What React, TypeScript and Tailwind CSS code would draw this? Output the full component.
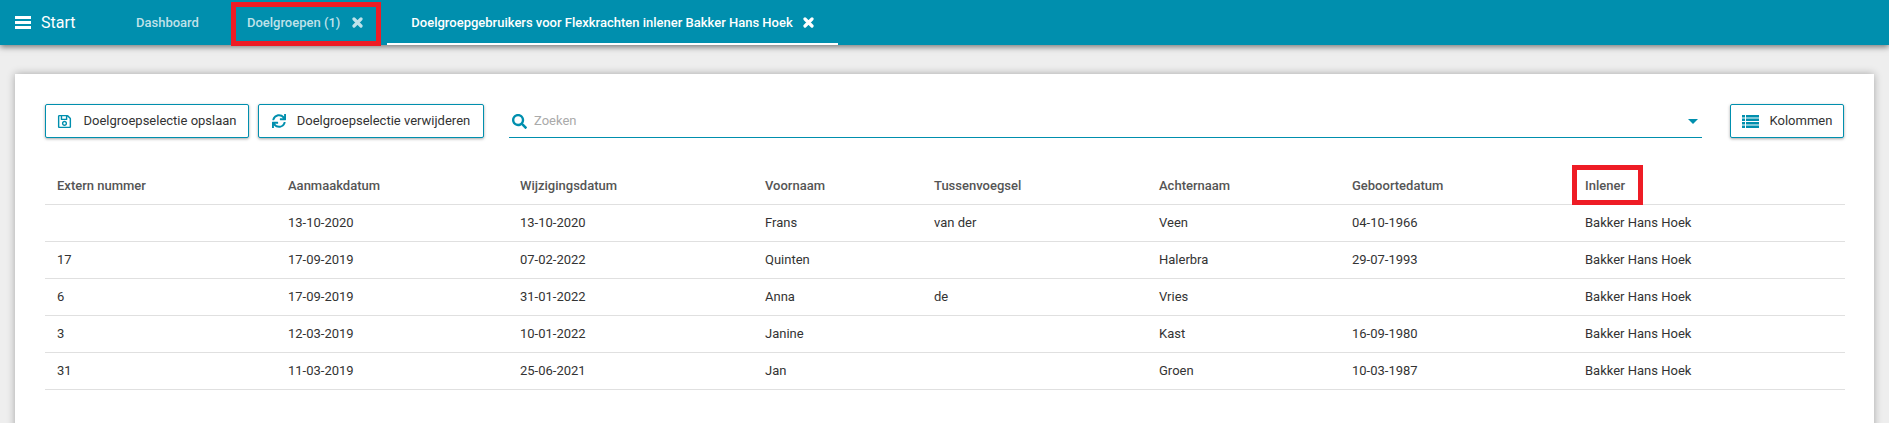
import { FaRegSave, FaSync, FaSearch } from "react-icons/fa";

const kolommen = [
  { naam: "Extern nummer", breedte: "w-[231px]" },
  { naam: "Aanmaakdatum", breedte: "w-[232px]" },
  { naam: "Wijzigingsdatum", breedte: "w-[245px]" },
  { naam: "Voornaam", breedte: "w-[169px]" },
  { naam: "Tussenvoegsel", breedte: "w-[225px]" },
  { naam: "Achternaam", breedte: "w-[193px]" },
  { naam: "Geboortedatum", breedte: "w-[233px]" },
  { naam: "Inlener", breedte: "w-[272px]" },
];

const rijen = [
  ["", "13-10-2020", "13-10-2020", "Frans", "van der", "Veen", "04-10-1966", "Bakker Hans Hoek"],
  ["17", "17-09-2019", "07-02-2022", "Quinten", "", "Halerbra", "29-07-1993", "Bakker Hans Hoek"],
  ["6", "17-09-2019", "31-01-2022", "Anna", "de", "Vries", "", "Bakker Hans Hoek"],
  ["3", "12-03-2019", "10-01-2022", "Janine", "", "Kast", "16-09-1980", "Bakker Hans Hoek"],
  ["31", "11-03-2019", "25-06-2021", "Jan", "", "Groen", "10-03-1987", "Bakker Hans Hoek"],
];

function Kruis() {
  return (
    <svg width="11" height="11" viewBox="0 0 11 11" className="shrink-0">
      <path d="M2 2L9 9M9 2L2 9" stroke="currentColor" strokeWidth="3.2" strokeLinecap="round" />
    </svg>
  );
}

function Balken() {
  return (
    <svg width="16" height="13" viewBox="0 0 16 13" fill="currentColor" className="shrink-0">
      <rect y="0" width="16" height="3" />
      <rect y="5" width="16" height="3" />
      <rect y="10" width="16" height="3" />
    </svg>
  );
}

function Lijst() {
  return (
    <svg width="17" height="13" viewBox="0 0 17 13" fill="currentColor" className="shrink-0 text-[#008fae]">
      {[0, 3.5, 7, 10.5].map((y) => (
        <g key={y}>
          <rect y={y} width="3" height="2.5" />
          <rect x="4" y={y} width="13" height="2.5" />
        </g>
      ))}
    </svg>
  );
}

function Knop({ breedte, icon, tekst }: { breedte: string; icon: React.ReactNode; tekst: string }) {
  return (
    <button
      type="button"
      className={`flex h-[34px] shrink-0 items-center justify-center gap-[11px] rounded-[2px] border border-[#008fae] bg-white text-[13px] text-[#333] shadow-[0_1px_3px_rgba(0,0,0,0.35)] ${breedte}`}
    >
      {icon}
      <span>{tekst}</span>
    </button>
  );
}

export default function App() {
  return (
    <div className="h-[423px] overflow-hidden bg-[#eeeeee] font-['Roboto',sans-serif]">
      <nav className="flex h-[45px] items-center bg-[#008fae] text-white shadow-[0_2px_6px_rgba(0,0,0,0.5)]">
        <div className="flex w-[112px] shrink-0 items-center gap-[10px] pl-[15px] text-base">
          <Balken />
          <span>Start</span>
        </div>
        <div className="flex h-full items-center px-6 text-[13px] font-medium text-white/75">Dashboard</div>
        <div className="relative flex h-full items-center gap-[12px] px-6 text-[13px] font-medium text-white/75">
          <span>Doelgroepen (1)</span>
          <Kruis />
          <div className="absolute -bottom-px left-2 right-1.5 top-[2px] border-[5px] border-[#ee1c25]" />
        </div>
        <div className="flex h-full items-center gap-[10px] border-b-2 border-white px-6 pt-0.5 text-[13px] font-medium">
          <span>Doelgroepgebruikers voor Flexkrachten inlener Bakker Hans Hoek</span>
          <Kruis />
        </div>
      </nav>

      <main className="mx-[15px] mt-[29px] h-[400px] bg-white px-[30px] pt-[30px] shadow-[0_0_8px_rgba(0,0,0,0.3)]">
        <div className="flex items-center">
          <Knop breedte="w-[204px]" icon={<FaRegSave className="text-[15px] text-[#008fae]" />} tekst="Doelgroepselectie opslaan" />
          <div className="ml-[9px]">
            <Knop breedte="w-[226px]" icon={<FaSync className="text-[14px] text-[#008fae]" />} tekst="Doelgroepselectie verwijderen" />
          </div>
          <div className="ml-[25px] flex h-[34px] flex-1 items-center border-b border-[#008fae] pl-[3px] pr-[4px] pt-px text-[13px] text-[#aaa]">
            <FaSearch className="mr-[7px] text-[15px] text-[#008fae]" />
            <span className="flex-1">Zoeken</span>
            <svg width="10" height="5" viewBox="0 0 10 5" className="text-[#008fae]">
              <path d="M0 0H10L5 5Z" fill="currentColor" />
            </svg>
          </div>
          <div className="ml-[28px]">
            <Knop breedte="w-[114px]" icon={<Lijst />} tekst="Kolommen" />
          </div>
        </div>

        <table className="mt-[28px] w-full table-fixed border-collapse text-[13px] text-[#333]">
          <thead>
            <tr className="h-[38px] border-b border-[#e0e0e0]">
              {kolommen.map((k) => (
                <th key={k.naam} className={`px-3 pt-px text-left font-medium text-[#555] ${k.breedte}`}>
                  {k.naam === "Inlener" ? (
                    <span className="relative inline-block">
                      {k.naam}
                      <span className="absolute -bottom-[10px] -left-[13px] -right-[18px] -top-[11px] border-[5px] border-[#ee1c25]" />
                    </span>
                  ) : (
                    k.naam
                  )}
                </th>
              ))}
            </tr>
          </thead>
          <tbody>
            {rijen.map((rij, i) => (
              <tr key={i} className="h-[37px] border-b border-[#e0e0e0]">
                {rij.map((cel, j) => (
                  <td key={j} className="px-3 pt-px">
                    {cel}
                  </td>
                ))}
              </tr>
            ))}
          </tbody>
        </table>
      </main>
    </div>
  );
}
